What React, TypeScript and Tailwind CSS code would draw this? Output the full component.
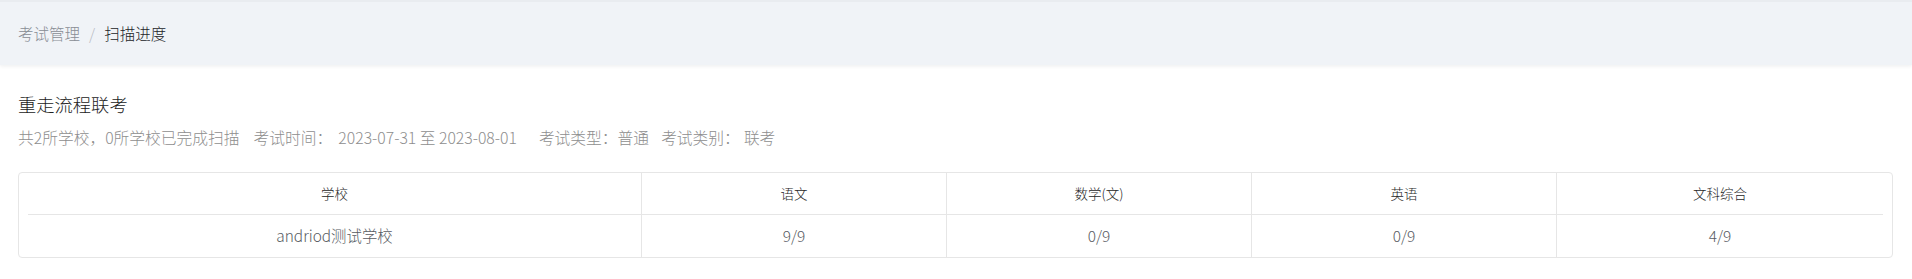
const subjects = [
  { name: '语文', progress: '9/9' },
  { name: '数学(文)', progress: '0/9' },
  { name: '英语', progress: '0/9' },
  { name: '文科综合', progress: '4/9' },
];

const headCell = 'flex h-[42px] items-center justify-center border-b border-[#e6e6e6] text-[13.5px] text-[#262626]';
const bodyCell = 'flex h-[42px] items-center justify-center border-[#e6e6e6] text-[15.4px] text-[#575b62]';

export default function App() {
  return (
    <div className="min-h-screen bg-white font-['Noto_Sans_CJK_SC','Noto_Sans',sans-serif] font-light">
      <div className="flex h-[65px] items-center border-t-[2px] border-[#e9ecf0] bg-[#f0f3f7] pl-[18px] text-[15.5px] shadow-[0_1px_4px_rgba(0,21,41,0.08)]">
        <span className="text-[#888d94]">考试管理</span>
        <span className="mx-[9px] text-[#b8bcc4]">/</span>
        <span className="text-[#222428]">扫描进度</span>
      </div>

      <div className="pl-[18px] pr-[19px]">
        <h1 className="mt-[27px] text-[18.3px] leading-6 text-[#222222]">重走流程联考</h1>
        <div className="mt-[11px] flex text-[15.75px] leading-[22px] text-[#8e8e8e]">
          <span>共2所学校，0所学校已完成扫描</span>
          <span className="ml-[14px]">考试时间：</span>
          <span className="ml-[6px]">2023-07-31 至 2023-08-01</span>
          <span className="ml-[22px]">考试类型：普通</span>
          <span className="ml-[12px]">考试类别：</span>
          <span className="ml-[4px]">联考</span>
        </div>

        <div className="mt-[23px] rounded-[4px] border border-[#e6e6e6] px-[9px]">
          <div className="grid grid-cols-[614px_305px_305px_305px_1fr] text-center">
            <div className={headCell + ' border-r'}>学校</div>
            {subjects.map((s, i) => (
              <div key={s.name} className={i < subjects.length - 1 ? headCell + ' border-r' : headCell}>
                {s.name}
              </div>
            ))}
            <div className={bodyCell + ' border-r'}>andriod测试学校</div>
            {subjects.map((s, i) => (
              <div key={s.name + '-v'} className={i < subjects.length - 1 ? bodyCell + ' border-r' : bodyCell}>
                {s.progress}
              </div>
            ))}
          </div>
        </div>
      </div>
    </div>
  );
}
